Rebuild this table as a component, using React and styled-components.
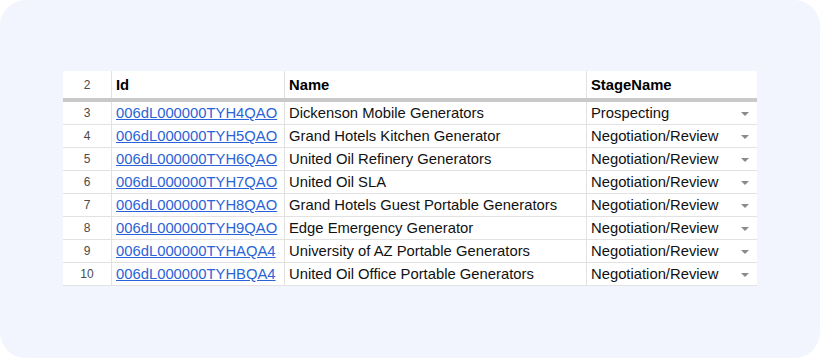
import React from 'react';
import styled, { createGlobalStyle } from 'styled-components';

const rows = [
    { n: 3, id: '006dL000000TYH4QAO', name: 'Dickenson Mobile Generators', stage: 'Prospecting' },
    { n: 4, id: '006dL000000TYH5QAO', name: 'Grand Hotels Kitchen Generator', stage: 'Negotiation/Review' },
    { n: 5, id: '006dL000000TYH6QAO', name: 'United Oil Refinery Generators', stage: 'Negotiation/Review' },
    { n: 6, id: '006dL000000TYH7QAO', name: 'United Oil SLA', stage: 'Negotiation/Review' },
    { n: 7, id: '006dL000000TYH8QAO', name: 'Grand Hotels Guest Portable Generators', stage: 'Negotiation/Review' },
    { n: 8, id: '006dL000000TYH9QAO', name: 'Edge Emergency Generator', stage: 'Negotiation/Review' },
    { n: 9, id: '006dL000000TYHAQA4', name: 'University of AZ Portable Generators', stage: 'Negotiation/Review' },
    { n: 10, id: '006dL000000TYHBQA4', name: 'United Oil Office Portable Generators', stage: 'Negotiation/Review' },
];

export default function App() {
    return (
        <>
            <GlobalStyle />
            <Frame>
                <Sheet>
                    <HeaderRow>
                        <RowNum>2</RowNum>
                        <HeadCell>Id</HeadCell>
                        <HeadCell>Name</HeadCell>
                        <HeadCell>StageName</HeadCell>
                    </HeaderRow>
                    <FrozenBar />
                    {rows.map((r) => (
                        <Row key={r.n}>
                            <RowNum>{r.n}</RowNum>
                            <Cell><IdLink href="#">{r.id}</IdLink></Cell>
                            <Cell>{r.name}</Cell>
                            <Cell>
                                {r.stage}
                                <Caret />
                            </Cell>
                        </Row>
                    ))}
                </Sheet>
            </Frame>
        </>
    );
}

const GlobalStyle = createGlobalStyle`
    html, body {
      margin: 0;
      padding: 0;
      background: #ffffff;
      font-family: "Liberation Sans", Arial, sans-serif;
    }
`;

const Frame = styled.div`
    width: 820px;
    height: 358px;
    box-sizing: border-box;
    background: #f2f5fe;
    border-radius: 26px;
    padding: 71px 0 0 63px;
`;

const Sheet = styled.div`
    width: 694px;
    background: #ffffff;
    display: flex;
    flex-direction: column;
`;

const columns = '49px 173px 302px 170px';

const HeaderRow = styled.div`
    display: grid;
    grid-template-columns: ${columns};
    height: 27px;
`;

const FrozenBar = styled.div`
    height: 4px;
    background: #c9c9c9;
`;

const Row = styled.div`
    display: grid;
    grid-template-columns: ${columns};
    height: 23px;
    box-sizing: border-box;
    border-bottom: 1px solid #e2e2e2;
`;

const RowNum = styled.div`
    display: flex;
    align-items: center;
    justify-content: center;
    font-size: 12px;
    color: #4a4a4a;
    border-right: 1px solid #e2e2e2;
`;

const HeadCell = styled.div`
    display: flex;
    align-items: center;
    padding-left: 4px;
    font-size: 14.8px;
    font-weight: bold;
    color: #000000;
    border-right: 1px solid #e2e2e2;
    &:last-child { border-right: none; }
`;

const Cell = styled.div`
    position: relative;
    display: flex;
    align-items: center;
    padding-left: 4px;
    font-size: 14.8px;
    color: #111111;
    white-space: nowrap;
    overflow: hidden;
    border-right: 1px solid #e2e2e2;
    &:last-child { border-right: none; }
`;

const IdLink = styled.a`
    color: #2a63d8;
    text-decoration: underline;
`;

const Caret = styled.span`
    position: absolute;
    right: 8px;
    top: 10px;
    width: 0;
    height: 0;
    border-left: 4px solid transparent;
    border-right: 4px solid transparent;
    border-top: 4px solid #8a8a8a;
`;
